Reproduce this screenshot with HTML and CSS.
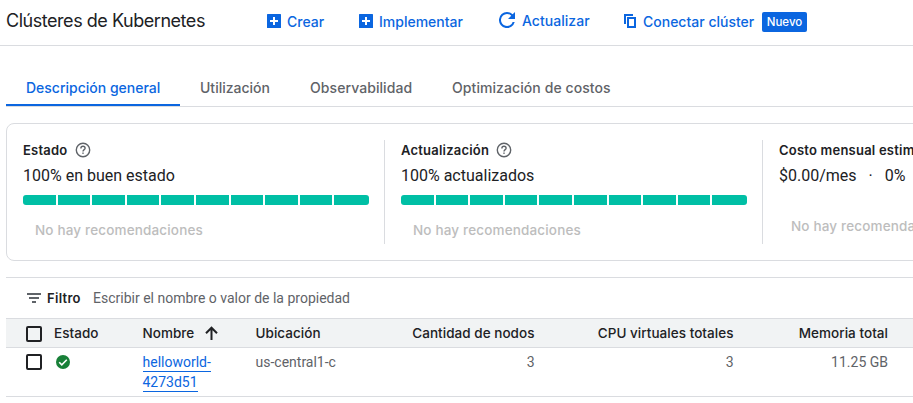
FILE: index.html
```html
<!DOCTYPE html>
<html lang="es">
<head>
<meta charset="utf-8">
<title>Clústeres de Kubernetes</title>
<link rel="stylesheet" href="styles.css">
</head>
<body>
<header class="toolbar">
  <h1 class="title">Clústeres de Kubernetes</h1>
  <a class="action create"><svg width="14" height="14" viewBox="0 0 14 14"><rect width="14" height="14" rx=".5" fill="currentColor"/><path d="M7 3v8M3 7h8" stroke="#fff" stroke-width="2"/></svg><span>Crear</span></a>
  <a class="action deploy"><svg width="14" height="14" viewBox="0 0 14 14"><rect width="14" height="14" rx=".5" fill="currentColor"/><path d="M7 3v8M3 7h8" stroke="#fff" stroke-width="2"/></svg><span>Implementar</span></a>
  <a class="action refresh"><svg width="16" height="16" viewBox="4 4 16 16"><path fill="currentColor" d="M17.65 6.35A7.96 7.96 0 0 0 12 4a8 8 0 1 0 7.73 10h-2.08A6 6 0 1 1 12 6c1.66 0 3.14.69 4.22 1.78L13 11h7V4z"/></svg><span>Actualizar</span></a>
  <a class="action connect"><svg width="12" height="14" viewBox="0 0 12 14"><path d="M1 10V1h8M4 4h7v9H4z" fill="none" stroke="currentColor" stroke-width="2"/></svg><span>Conectar clúster</span></a>
  <span class="badge">Nuevo</span>
</header>
<main>
  <nav class="tabs">
    <a class="tab active">Descripción general</a>
    <a class="tab use">Utilización</a>
    <a class="tab observe">Observabilidad</a>
    <a class="tab cost">Optimización de costos</a>
  </nav>
  <section class="summary">
    <div class="metric">
      <h2><span>Estado</span><svg class="help" width="16" height="16" viewBox="0 0 16 16"><circle cx="8" cy="8" r="6.7" fill="none" stroke="currentColor" stroke-width="1.4"/><path d="M5.9 6.4c0-1.25.95-2.1 2.1-2.1s2.1.8 2.1 1.95C10.1 7.7 8 7.7 8 9.5" fill="none" stroke="currentColor" stroke-width="1.4"/><rect x="7.3" y="10.5" width="1.4" height="1.4" fill="currentColor"/></svg></h2>
      <p class="value">100% en buen estado</p>
      <div class="bar"><i></i><i></i><i></i><i></i><i></i><i></i><i></i><i></i><i></i><i></i></div>
      <p class="none">No hay recomendaciones</p>
    </div>
    <div class="metric">
      <h2><span>Actualización</span><svg class="help" width="16" height="16" viewBox="0 0 16 16"><circle cx="8" cy="8" r="6.7" fill="none" stroke="currentColor" stroke-width="1.4"/><path d="M5.9 6.4c0-1.25.95-2.1 2.1-2.1s2.1.8 2.1 1.95C10.1 7.7 8 7.7 8 9.5" fill="none" stroke="currentColor" stroke-width="1.4"/><rect x="7.3" y="10.5" width="1.4" height="1.4" fill="currentColor"/></svg></h2>
      <p class="value">100% actualizados</p>
      <div class="bar"><i></i><i></i><i></i><i></i><i></i><i></i><i></i><i></i><i></i><i></i></div>
      <p class="none">No hay recomendaciones</p>
    </div>
    <div class="metric">
      <h2><span>Costo mensual estimado</span></h2>
      <p class="value price"><span>$0.00/mes</span><span>·</span><span>0%</span></p>
      <p class="none">No hay recomendaciones</p>
    </div>
  </section>
  <section class="clusters">
    <div class="filter"><svg width="14" height="10" viewBox="0 0 14 10"><path d="M0 1h14M2 5h10M5 9h4" stroke="currentColor" stroke-width="1.8"/></svg><b>Filtro</b><span>Escribir el nombre o valor de la propiedad</span></div>
    <div class="row head">
      <span class="check"></span><span>Estado</span><span class="c-name">Nombre<svg width="13" height="14" viewBox="0 0 13 14"><path d="M6.5 14V1.8M1 7.2l5.5-5.5L12 7.2" fill="none" stroke="currentColor" stroke-width="2"/></svg></span><span>Ubicación</span><span class="num">Cantidad de nodos</span><span class="num">CPU virtuales totales</span><span class="num">Memoria total</span>
    </div>
    <div class="row data">
      <span class="check"></span><span><svg class="ok" width="14" height="14" viewBox="0 0 14 14"><circle cx="7" cy="7" r="7" fill="#188038"/><path d="M3.2 7.2l2.6 2.6 5-5" fill="none" stroke="#fff" stroke-width="1.6"/></svg></span><span><a class="link">helloworld-<br>4273d51</a></span><span>us-central1-c</span><span class="num">3</span><span class="num">3</span><span class="num">11.25 GB</span>
    </div>
  </section>
</main>
</body>
</html>
```
FILE: styles.css
```css
* { box-sizing: border-box; }
body { margin: 0; overflow: hidden; background: #fff; color: #202124; font: 14px/20px Roboto, sans-serif; }
h1, h2, p { margin: 0; }
svg { flex: none; display: block; }
.toolbar { height: 46px; border-bottom: 1px solid #dadce0; display: flex; align-items: center; padding: 0 0 4px 6px; white-space: nowrap; }
.title { width: 261px; font: 400 18px/24px Inter, sans-serif; letter-spacing: -.46px; }
.action { display: flex; align-items: center; gap: 6px; color: #0b66e0; font: 500 14px/20px Inter, sans-serif; }
.action span { padding-top: 2px; }
.create { width: 92px; }
.deploy { width: 140px; }
.refresh { width: 125px; gap: 7px; padding-bottom: 2px; letter-spacing: .03px; }
.connect { width: 138px; gap: 7px; }
.badge { height: 20px; width: 45px; margin-top: 2px; border-radius: 2px; background: #0b66e0; color: #fff; font: 500 11.5px/20px Inter, sans-serif; text-align: center; }
main { margin-left: 6px; overflow: hidden; }
.tabs { display: flex; height: 61px; padding-top: 28px; border-bottom: 1px solid #dadce0; white-space: nowrap; font: 500 14px/28px Inter, sans-serif; color: #5f6368; }
.tab { margin-right: 40px; }
.active { width: 174px; height: 32px; padding-left: 20px; margin-right: 20px; border-bottom: 2px solid #0b66e0; color: #0b66e0; }
.use { width: 70px; }
.observe { width: 102px; letter-spacing: .07px; }
.cost { letter-spacing: .08px; }
.summary { width: 1140px; height: 138px; margin-top: 16px; padding: 16px 0; border: 1px solid #dadce0; border-radius: 8px; display: flex; }
.metric { width: 378px; height: 104px; padding: 0 15px 0 16px; border-right: 1px solid #dadce0; white-space: nowrap; }
.metric:last-child { border: 0; }
h2 { display: flex; align-items: center; gap: 7px; font: 600 13px/20px Inter, sans-serif; letter-spacing: .22px; }
.metric:first-child h2 { gap: 8px; }
.help { color: #5f6368; }
.value { margin-top: 5px; font-size: 16px; line-height: 22px; }
.bar { margin-top: 8px; height: 10px; width: 346px; display: flex; border-radius: 3px; overflow: hidden; }
.bar i { flex: 0 0 10%; background: #00bfa5; border-right: 2px solid #fff; }
.bar i:last-child { border: 0; }
.none { margin: 15px 0 0 12px; color: #bdbdbd; font: 500 13.5px/20px Inter, sans-serif; letter-spacing: .16px; }
.price { display: flex; gap: 12px; }
.price + .none { margin-top: 29px; }
.clusters { margin-top: 16px; border-top: 1px solid #dadce0; }
.filter { height: 40px; display: flex; align-items: center; padding-left: 21px; color: #5f6368; }
.filter b { width: 46px; margin-left: 6px; color: #202124; font: 600 13px/20px Inter, sans-serif; letter-spacing: .3px; }
.row { display: grid; grid-template-columns: 28px 88.5px 113px 120px 159px 199px 154.5px; padding-left: 20px; border-bottom: 1px solid #dadce0; }
.head { height: 30px; border-top: 1px solid #dadce0; background: #f1f3f4; align-items: center; white-space: nowrap; font: 500 13.5px/28px Inter, sans-serif; letter-spacing: .04px; }
.check { width: 16px; height: 16px; border: 2px solid #202124; border-radius: 2px; }
.head .check { margin-top: 2px; }
.c-name { display: flex; align-items: center; gap: 11px; }
.num { text-align: right; }
.data { height: 49px; padding-top: 4px; color: #5f6368; }
.data .check { margin-top: 2px; }
.ok { margin: 3px 0 0 2px; }
.link { color: #0b66e0; padding-bottom: 1px; border-bottom: 1px solid #0b66e0; }
```
